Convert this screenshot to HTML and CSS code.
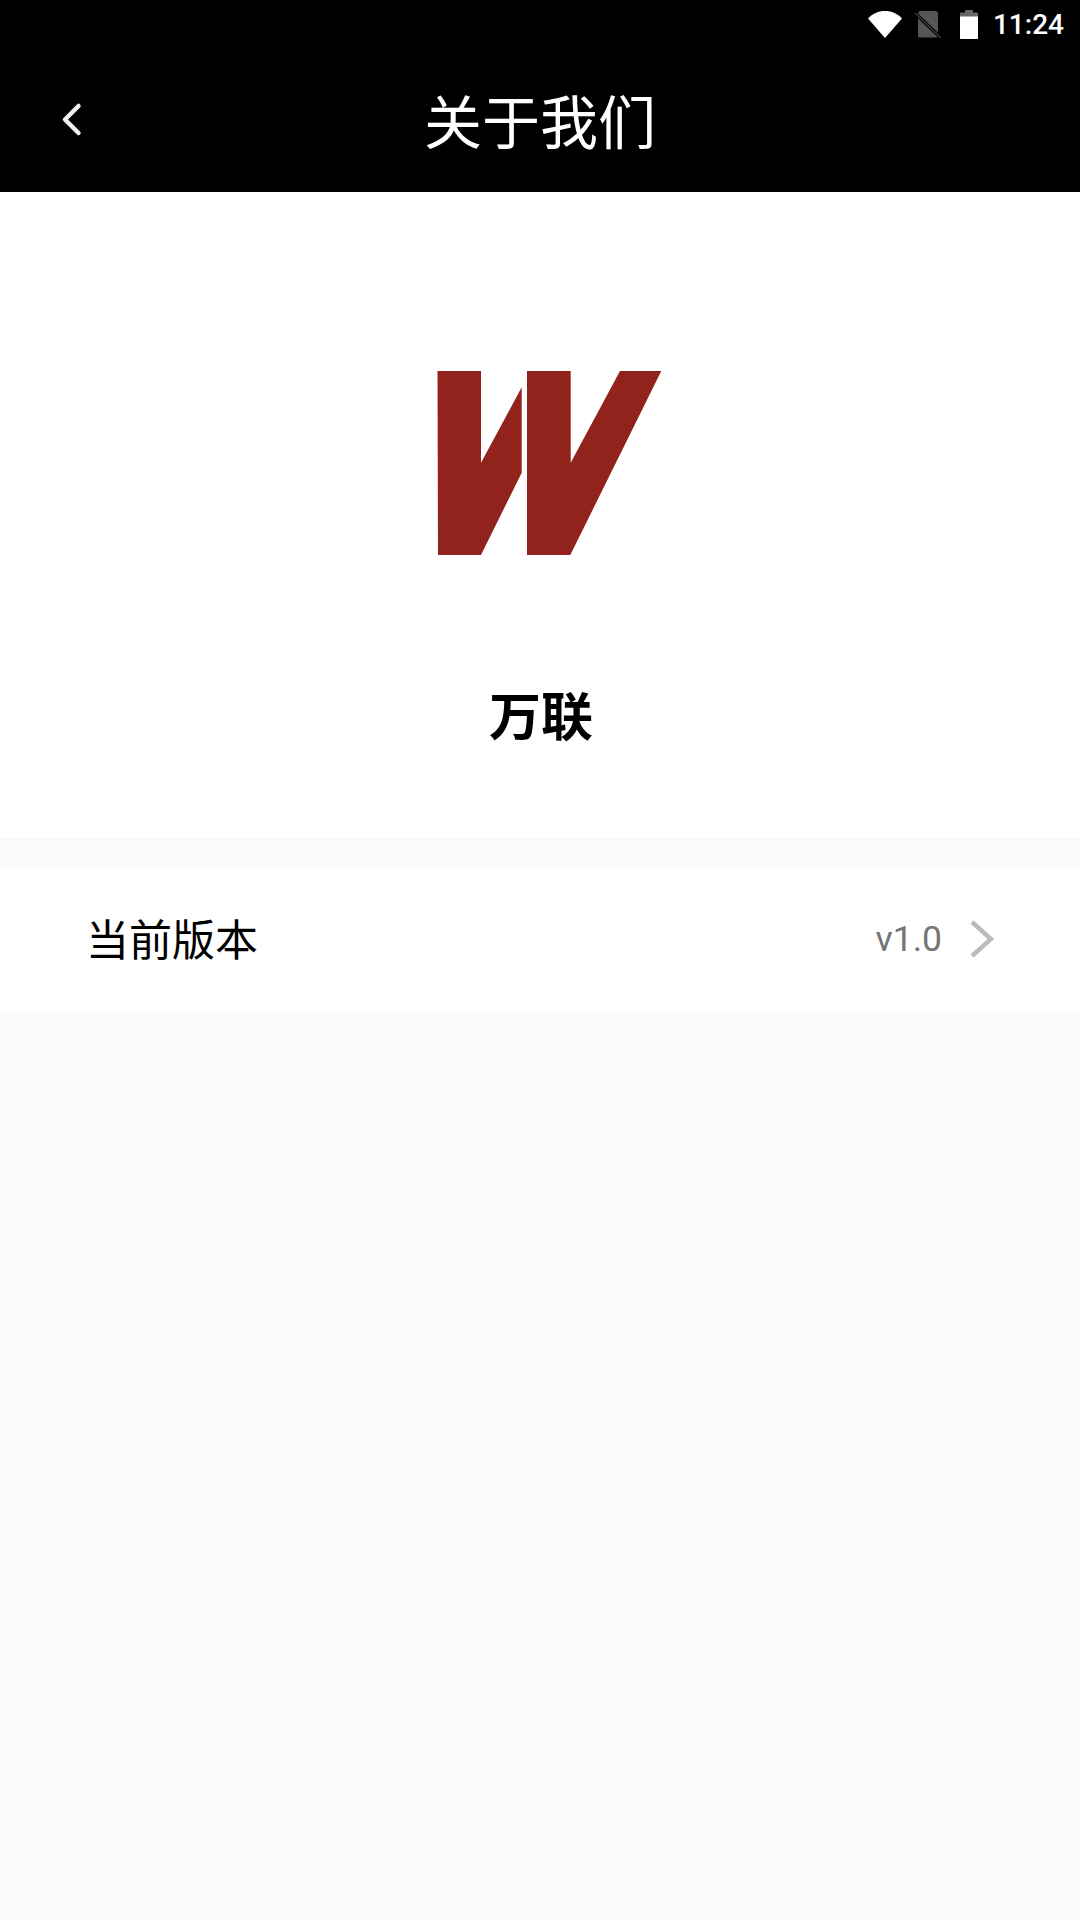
FILE: index.html
```html
<!DOCTYPE html>
<html lang="zh-CN">
<head>
    <meta charset="UTF-8">
    <meta name="viewport" content="width=device-width, initial-scale=1.0">
    <title>关于我们</title>
    <link rel="stylesheet" href="styles.css">
</head>
<body>
    <div class="statusbar">
        <svg class="icon-wifi" width="36" height="28" viewBox="0 0 36 28">
            <path d="M1 8.500C5.500 3.500 11.500 1 18 1s12.500 2.500 17 7.500L18 28z" fill="#fff"/>
        </svg>
        <svg class="icon-sim" width="28" height="28" viewBox="0 0 28 28">
            <path d="M5 3.500C5 2 6 1 7.500 1H22.500c1.500 0 2.500 1 2.500 2.500V26c0 1-.5 1.500-1.500 1.500H6.500C5.500 27.500 5 27 5 26z" fill="#555"/>
            <path d="M2 3L28 28" stroke="#000" stroke-width="3.500" fill="none"/>
            <path d="M2 3L28 28" stroke="#3a3a3a" stroke-width="1.500" fill="none"/>
        </svg>
        <svg class="icon-battery" width="18" height="29" viewBox="0 0 18 29">
            <path d="M5 2.500V0h8v2.500h4c.6 0 1 .4 1 1v5H0v-5c0-.6.400-1 1-1z" fill="#666"/>
            <path d="M0 6.500h18V28c0 .6-.4 1-1 1H1c-.6 0-1-.4-1-1z" fill="#fff"/>
        </svg>
        <span class="clock">11:24</span>
    </div>

    <div class="toolbar">
        <svg class="back" width="22" height="36" viewBox="0 0 22 36">
            <path d="M17.500 4L4 17.500 17.500 31" stroke="#eee" stroke-width="4.500" stroke-linecap="round" stroke-linejoin="round" fill="none"/>
        </svg>
        <h1 class="toolbar-title">关于我们</h1>
    </div>

    <div class="hero">
        <svg class="logo" width="226" height="186" viewBox="0 0 226 186">
            <path d="M1.500 2H45V93.700L85.700 18.300V103.700L45 186H2z" fill="#92231c"/>
            <path d="M91 2H134.700V93.700L184 2H225.300L134.300 186H91z" fill="#92231c"/>
        </svg>
        <div class="app-name">万联</div>
    </div>

    <div class="row">
        <span class="row-label">当前版本</span>
        <span class="row-value">v1.0</span>
        <svg class="chevron" width="24" height="38" viewBox="0 0 24 38">
            <path d="M2 2l19 17L2 36" stroke="#bbb" stroke-width="4.500" fill="none"/>
        </svg>
    </div>
</body>
</html>
```

FILE: styles.css
```css
html, body {
    margin: 0;
    padding: 0;
}
body {
    width: 1080px;
    height: 1920px;
    overflow: hidden;
    background-color: #fafafa;
    font-family: "Noto Sans CJK SC", Roboto, sans-serif;
}
.statusbar {
    display: flex;
    align-items: center;
    height: 48px;
    padding-right: 16px;
    justify-content: flex-end;
    background-color: #000;
}
.icon-wifi {
    margin-right: 10px;
}
.icon-sim {
    margin-right: 19px;
}
.icon-battery {
    margin-right: 15px;
}
.clock {
    font-family: Roboto, sans-serif;
    font-weight: 500;
    font-size: 28px;
    color: #fff;
}
.toolbar {
    position: relative;
    display: flex;
    align-items: center;
    justify-content: center;
    height: 144px;
    background-color: #000;
}
.back {
    position: absolute;
    left: 61px;
    top: 54px;
}
.toolbar-title {
    margin: 0;
    font-size: 58px;
    font-weight: 400;
    line-height: 1;
    color: #fff;
    transform: translateY(-1px);
}
.hero {
    display: flex;
    flex-direction: column;
    align-items: center;
    height: 646px;
    box-sizing: border-box;
    padding-top: 177px;
    background-color: #fff;
}
.logo {
    margin-left: 18px;
}
.app-name {
    margin-top: 133px;
    font-size: 52px;
    font-weight: 700;
    line-height: 1;
    color: #000;
    transform: translateX(1px);
}
.row {
    display: flex;
    align-items: center;
    height: 144px;
    margin-top: 29px;
    padding: 0 86px 0 86px;
    background-color: #fff;
}
.row-label {
    flex: 1;
    font-size: 43px;
    color: #000;
    transform: translateY(-2px);
}
.row-value {
    font-family: Roboto, sans-serif;
    font-size: 35.500px;
    color: #757575;
    margin-right: 28px;
}
```
